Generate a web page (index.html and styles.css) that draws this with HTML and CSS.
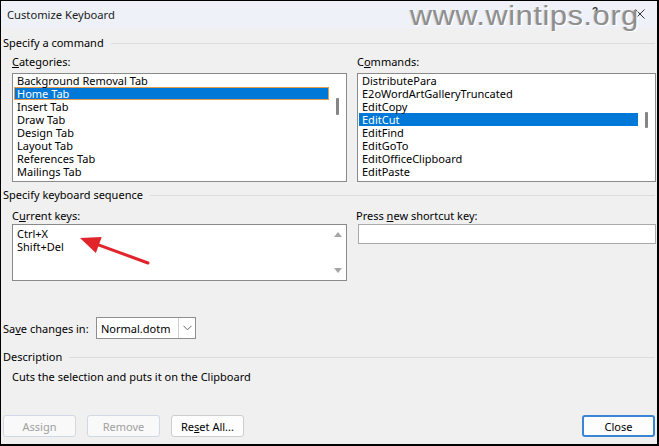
FILE: index.html
```html
<!DOCTYPE html>
<html lang="en">
<head>
<meta charset="utf-8">
<title>Customize Keyboard</title>
<link rel="stylesheet" href="styles.css">
</head>
<body>
<div class="window">
  <div class="titlebar">
    <span class="title">Customize Keyboard</span>
    <span class="help">?</span>
    <svg class="close-x" width="10" height="10" viewBox="0 0 10 10"><path d="M0.5 0.5 L9.5 9.5 M9.5 0.5 L0.5 9.5" stroke="#333" stroke-width="1" fill="none"/></svg>
    <span class="watermark">www.wintips.org</span>
  </div>

  <div class="content">
    <div class="group-title">Specify a command</div>
    <div class="cols cols-cmd">
      <div class="field">
        <div class="label"><u>C</u>ategories:</div>
        <div class="listbox">
          <ul class="items">
            <li>Background Removal Tab</li>
            <li class="selected focused">Home Tab</li>
            <li>Insert Tab</li>
            <li>Draw Tab</li>
            <li>Design Tab</li>
            <li>Layout Tab</li>
            <li>References Tab</li>
            <li>Mailings Tab</li>
          </ul>
          <div class="vscroll"><span class="thumb thumb-cat"></span></div>
        </div>
      </div>
      <div class="field">
        <div class="label">C<u>o</u>mmands:</div>
        <div class="listbox">
          <ul class="items">
            <li>DistributePara</li>
            <li>E2oWordArtGalleryTruncated</li>
            <li>EditCopy</li>
            <li class="selected">EditCut</li>
            <li>EditFind</li>
            <li>EditGoTo</li>
            <li>EditOfficeClipboard</li>
            <li>EditPaste</li>
          </ul>
          <div class="vscroll"><span class="thumb thumb-cmd"></span></div>
        </div>
      </div>
    </div>

    <div class="group-title group-keys">Specify keyboard sequence</div>
    <div class="cols cols-keys">
      <div class="field">
        <div class="label">C<u>u</u>rrent keys:</div>
        <div class="keysbox">
          <ul class="items keys">
            <li>Ctrl+X</li>
            <li>Shift+Del</li>
          </ul>
          <div class="arrows">
            <span class="tri tri-up"></span>
            <span class="tri tri-down"></span>
          </div>
        </div>
      </div>
      <div class="field">
        <div class="label label-new">Press <u>n</u>ew shortcut key:</div>
        <div class="input"></div>
      </div>
    </div>

    <div class="save-row">
      <span class="save-label">Sa<u>v</u>e changes in:</span>
      <div class="combo">
        <span class="combo-value">Normal.dotm</span>
        <span class="combo-btn">
          <svg width="9" height="6" viewBox="0 0 9 6"><path d="M0.5 0.8 L4.5 4.8 L8.5 0.8" stroke="#666" stroke-width="1" fill="none"/></svg>
        </span>
      </div>
    </div>

    <div class="group-title group-desc">Description</div>
    <p class="desc">Cuts the selection and puts it on the Clipboard</p>

    <div class="buttons">
      <button class="btn disabled">Assign</button>
      <button class="btn disabled">Remove</button>
      <button class="btn">Re<u>s</u>et All...</button>
      <button class="btn default">Close</button>
    </div>
  </div>

  <svg class="pointer" width="90" height="40" viewBox="0 0 90 40">
    <line x1="78" y1="35" x2="27" y2="16.3" stroke="#e1242a" stroke-width="3" stroke-linecap="round"/>
    <polygon points="10,10 31.7,8.9 25.9,24.9" fill="#e1242a"/>
  </svg>
</div>
</body>
</html>
```

FILE: styles.css
```css
* {
  box-sizing: border-box;
  margin: 0;
  padding: 0;
}

html, body {
  width: 659px;
  height: 446px;
  overflow: hidden;
}

body {
  background: #000;
  font-family: "Noto Sans", "Segoe UI", sans-serif;
  font-size: 11px;
  color: #000;
}

u {
  text-decoration: underline;
  text-underline-offset: 1px;
}

.window {
  position: relative;
  width: 659px;
  height: 446px;
  border-style: solid;
  border-color: #000;
  border-width: 1px 2px 2px 1px;
  display: flex;
  flex-direction: column;
  background: #f0f0f0;
}

/* title bar */
.titlebar {
  position: relative;
  flex: none;
  height: 27px;
  background: #eef2f8;
  display: flex;
  align-items: center;
  padding: 0 12px 0 6px;
  font-size: 11.2px;
  color: #1a1a1a;
}

.title {
  flex: 1;
}

.help {
  font-family: "Liberation Sans", sans-serif;
  font-weight: bold;
  font-size: 10px;
  color: #333;
  margin-right: 37px;
  margin-top: -6px;
}

.close-x {
  margin-top: -2px;
}

.watermark {
  position: absolute;
  left: 409px;
  top: 2px;
  z-index: 2;
  font-family: "Liberation Sans", sans-serif;
  font-size: 27px;
  line-height: 27px;
  letter-spacing: 0.6px;
  color: #8e8e8e;
  text-shadow: 1px 1px 0 #fff, -1px 0 0 #d8d8d8;
  transform: scaleX(1.13);
  transform-origin: left top;
  white-space: nowrap;
}

/* dialog body */
.content {
  flex: 1;
  padding: 0 2px 0 2px;
  display: flex;
  flex-direction: column;
}

.group-title {
  display: flex;
  align-items: center;
  height: 14px;
  line-height: 14px;
  margin-top: 8px;
}

.group-title::after {
  content: "";
  flex: 1;
  border-top: 1px solid #dcdcdc;
  margin-left: 7px;
}

.cols {
  display: grid;
  grid-template-columns: 335px 299px;
  column-gap: 10px;
  margin-left: 9px;
}

.label {
  height: 13px;
  line-height: 13px;
  white-space: nowrap;
}

.cols-cmd {
  margin-top: 5px;
}

.cols-cmd .label {
  margin-bottom: 5px;
}

.listbox {
  height: 109px;
  background: #fff;
  border: 1px solid #8a8a8a;
  display: flex;
  overflow: hidden;
}

.items {
  list-style: none;
  flex: 1;
  padding-left: 1px;
}

.items li {
  height: 13px;
  line-height: 13px;
  padding-left: 3px;
  white-space: nowrap;
}

.items li.selected {
  background: #0078d7;
  color: #fff;
}

.items li.focused {
  box-shadow: inset 0 0 0 1px #e39a4b;
}

.vscroll {
  position: relative;
  width: 17px;
  flex: none;
}

.thumb {
  position: absolute;
  left: 7px;
  width: 3px;
  border-radius: 1px;
  background: #858585;
}

.thumb-cat {
  top: 24px;
  height: 17px;
}

.thumb-cmd {
  top: 38px;
  height: 16px;
}

.group-keys {
  margin-top: 6px;
}

.cols-keys {
  margin-top: 7px;
}

.cols-keys .label {
  margin-bottom: 2px;
}

.keysbox {
  height: 57px;
  background: #fff;
  border: 1px solid #8a8a8a;
  display: flex;
}

.keys {
  padding-top: 2px;
}

.arrows {
  width: 17px;
  flex: none;
  display: flex;
  flex-direction: column;
  justify-content: space-between;
  align-items: center;
  padding: 7px 0 7px 1px;
}

.tri {
  width: 0;
  height: 0;
  border-left: 4px solid transparent;
  border-right: 4px solid transparent;
}

.tri-up {
  border-bottom: 5px solid #a6a6a6;
}

.tri-down {
  border-top: 5px solid #a6a6a6;
}

.label-new {
  margin-left: -1px;
}

.input {
  height: 20px;
  margin-top: 1px;
  margin-left: 1px;
  background: #fff;
  border: 1px solid #a9a9a9;
}

/* save changes row */
.save-row {
  display: flex;
  align-items: center;
  margin-top: 36px;
  height: 22px;
}

.save-label {
  width: 93px;
  line-height: 13px;
}

.combo {
  width: 100px;
  height: 22px;
  background: #fff;
  border: 1px solid #8f8f8f;
  display: flex;
  align-items: center;
}

.combo-value {
  flex: 1;
  padding-left: 4px;
}

.combo-btn {
  width: 17px;
  height: 100%;
  border-left: 1px solid #d0d0d0;
  display: flex;
  align-items: center;
  justify-content: center;
}

.group-desc {
  margin-top: 11px;
}

.desc {
  margin-top: 6px;
  padding-left: 9px;
  line-height: 13px;
}

/* command buttons */
.buttons {
  display: flex;
  margin-top: 32px;
  gap: 11px;
}

.btn {
  width: 73px;
  height: 22px;
  font: inherit;
  color: #000;
  background: #fdfdfd;
  border: 1px solid #cdcdcd;
  border-radius: 3px;
}

.btn.disabled {
  color: #a0a0a0;
  border-color: #cfd9e3;
  background: #f9f9f9;
}

.btn.default {
  margin-left: auto;
  margin-right: 0;
  border: 2px solid #3a86d4;
}

/* red call-out arrow over the keys list */
.pointer {
  position: absolute;
  left: 69px;
  top: 227px;
  z-index: 3;
}
```
